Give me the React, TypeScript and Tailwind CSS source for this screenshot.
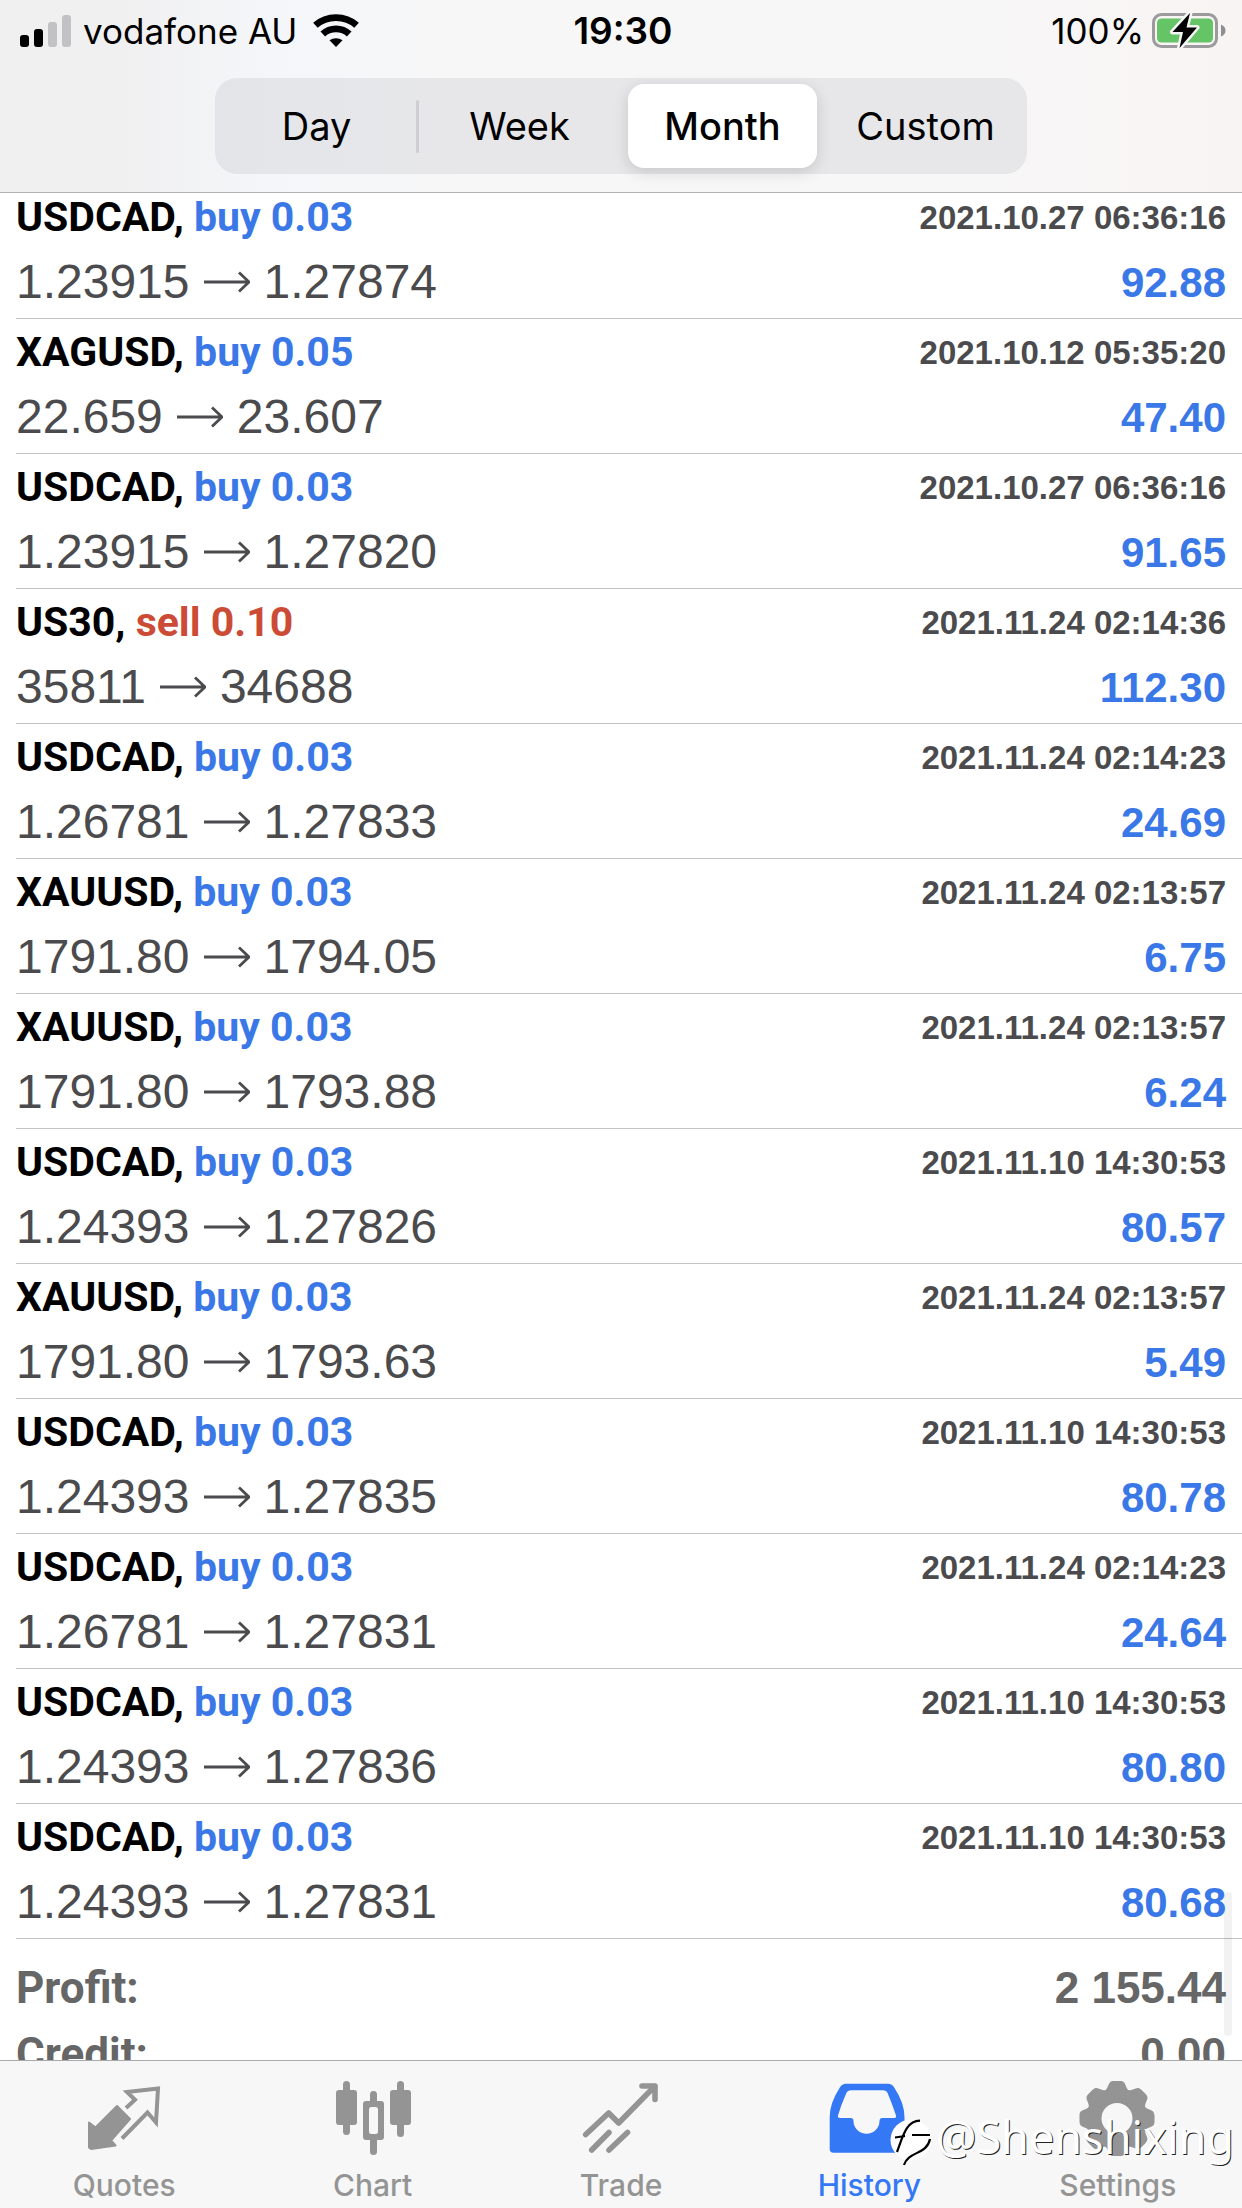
import type { ReactNode } from "react";
import clsx from "clsx";

type Deal = {
  symbol: string;
  side: "buy" | "sell";
  volume: string;
  open: string;
  close: string;
  time: string;
  profit: string;
};

const deals: Deal[] = [
  { symbol: "USDCAD", side: "buy", volume: "0.03", open: "1.23915", close: "1.27874", time: "2021.10.27 06:36:16", profit: "92.88" },
  { symbol: "XAGUSD", side: "buy", volume: "0.05", open: "22.659", close: "23.607", time: "2021.10.12 05:35:20", profit: "47.40" },
  { symbol: "USDCAD", side: "buy", volume: "0.03", open: "1.23915", close: "1.27820", time: "2021.10.27 06:36:16", profit: "91.65" },
  { symbol: "US30", side: "sell", volume: "0.10", open: "35811", close: "34688", time: "2021.11.24 02:14:36", profit: "112.30" },
  { symbol: "USDCAD", side: "buy", volume: "0.03", open: "1.26781", close: "1.27833", time: "2021.11.24 02:14:23", profit: "24.69" },
  { symbol: "XAUUSD", side: "buy", volume: "0.03", open: "1791.80", close: "1794.05", time: "2021.11.24 02:13:57", profit: "6.75" },
  { symbol: "XAUUSD", side: "buy", volume: "0.03", open: "1791.80", close: "1793.88", time: "2021.11.24 02:13:57", profit: "6.24" },
  { symbol: "USDCAD", side: "buy", volume: "0.03", open: "1.24393", close: "1.27826", time: "2021.11.10 14:30:53", profit: "80.57" },
  { symbol: "XAUUSD", side: "buy", volume: "0.03", open: "1791.80", close: "1793.63", time: "2021.11.24 02:13:57", profit: "5.49" },
  { symbol: "USDCAD", side: "buy", volume: "0.03", open: "1.24393", close: "1.27835", time: "2021.11.10 14:30:53", profit: "80.78" },
  { symbol: "USDCAD", side: "buy", volume: "0.03", open: "1.26781", close: "1.27831", time: "2021.11.24 02:14:23", profit: "24.64" },
  { symbol: "USDCAD", side: "buy", volume: "0.03", open: "1.24393", close: "1.27836", time: "2021.11.10 14:30:53", profit: "80.80" },
  { symbol: "USDCAD", side: "buy", volume: "0.03", open: "1.24393", close: "1.27831", time: "2021.11.10 14:30:53", profit: "80.68" },
];

const totals = [
  { label: "Profit:", value: "2 155.44" },
  { label: "Credit:", value: "0.00" },
];

const periods = ["Day", "Week", "Month", "Custom"];

function StatusBar() {
  return (
    <div className="grid h-[62px] grid-cols-3 items-center pl-5 pr-4 text-[35px]">
      <div className="flex items-center">
        <svg width="51" height="34" viewBox="0 0 51 34">
          <rect x="0" y="21" width="9" height="12" rx="3" />
          <rect x="14" y="15" width="9" height="18" rx="3" />
          <rect x="28" y="8" width="9" height="25" rx="3" fill="#c2c2c4" />
          <rect x="42" y="1" width="9" height="32" rx="3" fill="#c2c2c4" />
        </svg>
        <span className="ml-3 whitespace-nowrap">vodafone AU</span>
        <svg className="ml-4" width="46" height="36" viewBox="0 0 46 36">
          <path d="M23 34l-6.500-6.700a9.500 8 0 0 1 13 0z" />
          <g fill="none" stroke="#000" strokeWidth="6.800">
            <path d="M9.800 21a18.500 17 0 0 1 26.400 0" />
            <path d="M2.400 12.200a29.500 27 0 0 1 41.200 0" />
          </g>
        </svg>
      </div>
      <span className="text-center text-[37px] font-semibold">19:30</span>
      <div className="flex items-center justify-end gap-2">
        <span>100%</span>
        <svg width="74" height="36" viewBox="0 0 74 36">
          <rect x="1.500" y="1.500" width="63" height="32" rx="8" fill="none" stroke="#9b9b9d" strokeWidth="3" />
          <rect x="5" y="5.500" width="56" height="24" rx="4.500" fill="#65c466" />
          <path d="M69 11.500q4.500 2 4.500 6t-4.500 6z" fill="#8f8f91" />
          <path
            d="M38 0L20.500 19H31l-3.500 16L45 14.500H34.500z"
            stroke="#f7f6f6"
            strokeWidth="5"
            strokeLinejoin="round"
            className="[paint-order:stroke]"
          />
        </svg>
      </div>
    </div>
  );
}

function PeriodSwitch() {
  return (
    <div className="mx-auto mt-4 flex h-24 w-[812px] max-w-full items-center rounded-[22px] bg-[#767680]/12 text-[38px]">
      {periods.map((p) => (
        <button
          key={p}
          className={clsx(
            "relative mx-[7px] h-[84px] flex-1 rounded-2xl",
            p === "Month" && "bg-white font-medium shadow-[0_4px_16px_rgba(0,0,0,0.14)]"
          )}
        >
          {p}
          {p === "Day" && <span className="absolute -right-2 top-4 h-[53px] w-[3px] rounded bg-[#cfcfd3]" />}
        </button>
      ))}
    </div>
  );
}

function Arrow() {
  return (
    <svg width="46" height="24" viewBox="0 0 46 24" className="ml-3.5 mr-3.5" fill="none" stroke="#4b4b4e" strokeWidth="2.800">
      <path d="M0 12h44.500M35 2.500l10 9.500-10 9.500" />
    </svg>
  );
}

function DealRow({ deal }: { deal: Deal }) {
  return (
    <li className="ml-4 h-[135px] border-b border-[#c2c2c4] pr-4">
      <div className="flex h-[68px] items-center justify-between font-bold">
        <p className="font-[Roboto,sans-serif] text-[41px]">
          {deal.symbol},{" "}
          <span className={deal.side === "buy" ? "text-[#3b78e7]" : "text-[#cc4b37]"}>
            {deal.side} {deal.volume}
          </span>
        </p>
        <time className="text-[33px] text-[#4b4b4e]">{deal.time}</time>
      </div>
      <div className="flex h-[60px] items-center justify-between">
        <p className="flex items-center text-[48px] leading-[58px] text-[#4b4b4e]">
          {deal.open}
          <Arrow />
          {deal.close}
        </p>
        <span className="text-[42px] font-bold text-[#3b78e7]">{deal.profit}</span>
      </div>
    </li>
  );
}

function QuotesIcon() {
  return (
    <svg width="80" height="80" viewBox="0 0 80 80">
      <path
        d="M33 27l13 13-19 21.500 4.500 5L7 70l-2-1.500V43.500l6.500 5z"
        fill="currentColor"
        stroke="currentColor"
        strokeWidth="2"
        strokeLinejoin="round"
      />
      <path d="M42 29l9-8.200L43 13l31-3.500-2 34-8.500-10L38 59.500" fill="none" stroke="currentColor" strokeWidth="4" />
    </svg>
  );
}

function ChartIcon() {
  return (
    <svg width="80" height="80" viewBox="0 0 80 80" fill="currentColor">
      <rect x="3" y="11" width="21" height="35" rx="3" />
      <rect x="10" y="2" width="7" height="54" rx="3.500" />
      <rect x="57" y="11" width="21" height="35" rx="3" />
      <rect x="64" y="2" width="7" height="56" rx="3.500" />
      <path fillRule="evenodd" d="M33 22h15q3 0 3 3v33q0 3-3 3H33q-3 0-3-3V25q0-3 3-3zm5.500 6q-2.500 0-2.500 2.500v22q0 2.500 2.500 2.500h4q2.500 0 2.500-2.500v-22q0-2.500-2.500-2.500z" />
      <path d="M37 23v-7.500a3.500 3.500 0 0 1 7 0V23zM37 60v12.500a3.500 3.500 0 0 0 7 0V60z" />
    </svg>
  );
}

function TradeIcon() {
  return (
    <svg width="80" height="80" viewBox="0 0 80 80" fill="none" stroke="currentColor" strokeWidth="5.600" strokeLinecap="round" strokeLinejoin="round">
      <path d="M4.700 55.500L27.700 34l10 10L73.500 7.500" />
      <path d="M61 7h13v13.500" />
      <path d="M10.700 71L28 53.500M28 71l18.500-17.500" />
    </svg>
  );
}

function HistoryIcon() {
  return (
    <svg width="80" height="80" viewBox="0 0 80 80" fill="currentColor">
      <path
        fillRule="evenodd"
        d="M17 4.700H59q4 0 6 3.500Q75.500 24 75.500 38V70q0 3.700-3.700 3.700H4.500Q.7 73.700.7 70V38Q.7 24 11 8.200q2-3.500 6-3.500zM21.500 11.300q-3 0-4 2.500Q12 26 9 36.500q-.5 2.500 2 2.500h10.500q3 0 3 3a13 12.700 0 0 0 26 0q0-3 3-3H65q2.700 0 2-2.500Q63.500 26 58.500 13.800q-1-2.500-4-2.500z"
      />
    </svg>
  );
}

function SettingsIcon() {
  return (
    <svg width="80" height="80" viewBox="0 0 80 80">
      <circle cx="39" cy="39.500" r="23" fill="none" stroke="currentColor" strokeWidth="15" />
      {[0, 45, 90, 135, 180, 225, 270, 315].map((a) => (
        <path key={a} transform={`rotate(${a} 39 39.5)`} d="M25 13C32 10 28.500 2 36 2h6c7.500 0 4 8 11 11L46 20H32z" fill="currentColor" />
      ))}
    </svg>
  );
}

const tabs: { label: string; icon: ReactNode }[] = [
  { label: "Quotes", icon: <QuotesIcon /> },
  { label: "Chart", icon: <ChartIcon /> },
  { label: "Trade", icon: <TradeIcon /> },
  { label: "History", icon: <HistoryIcon /> },
  { label: "Settings", icon: <SettingsIcon /> },
];

function Watermark() {
  return (
    <div className="pointer-events-none absolute right-2 top-11 flex items-center font-['Noto_Sans',sans-serif] text-[45px] leading-[64px] text-white [text-shadow:1px_1px_0_#222]">
      <svg width="58" height="64" viewBox="0 -3 58 64">
        <circle cx="33" cy="32" r="20.500" fill="#fff" />
        <g fill="none" stroke="#000" strokeWidth="2.200">
          <path d="M42 12.700C28 13 25 28 19 44M17 29.500l10-1.500M34 27h18" />
          <path d="M52 31C49 47 30 43 26 57" />
        </g>
      </svg>
      @Shenshixing
    </div>
  );
}

export default function App() {
  return (
    <div className="flex h-screen flex-col bg-white font-[Inter,sans-serif] text-black">
      <header className="h-[193px] shrink-0 border-b border-[#b2b2b4] bg-[linear-gradient(90deg,#f0f0f0,#f0f0f1_10%,#f5f6f9_22%,#f7f7f7_40%,#f7f7f7_75%,#f9f4f4)]">
        <StatusBar />
        <PeriodSwitch />
      </header>
      <main className="relative min-h-0 flex-1 overflow-hidden font-['Liberation_Sans',sans-serif]">
        <ul className="-mt-[9px]">
          {deals.map((d, i) => (
            <DealRow key={i} deal={d} />
          ))}
        </ul>
        <dl className="px-4 pt-4 text-[44px] font-bold leading-[66px] text-[#666]">
          {totals.map((t) => (
            <div key={t.label} className="flex justify-between">
              <dt className="font-[Roboto,sans-serif]">{t.label}</dt>
              <dd>{t.value}</dd>
            </div>
          ))}
        </dl>
        <div className="absolute bottom-6 right-2.5 h-36 w-2 rounded bg-black/5" />
      </main>
      <nav className="relative flex h-[148px] shrink-0 border-t border-[#a9a9ab] bg-[#f7f7f7]">
        {tabs.map((t) => (
          <a
            key={t.label}
            href="#"
            className={clsx(
              "flex flex-1 flex-col items-center gap-2 pt-[18px] text-[30px] font-medium leading-9",
              t.label === "History" ? "text-[#3478f6]" : "text-[#949494]"
            )}
          >
            {t.icon}
            {t.label}
          </a>
        ))}
        <Watermark />
      </nav>
    </div>
  );
}
